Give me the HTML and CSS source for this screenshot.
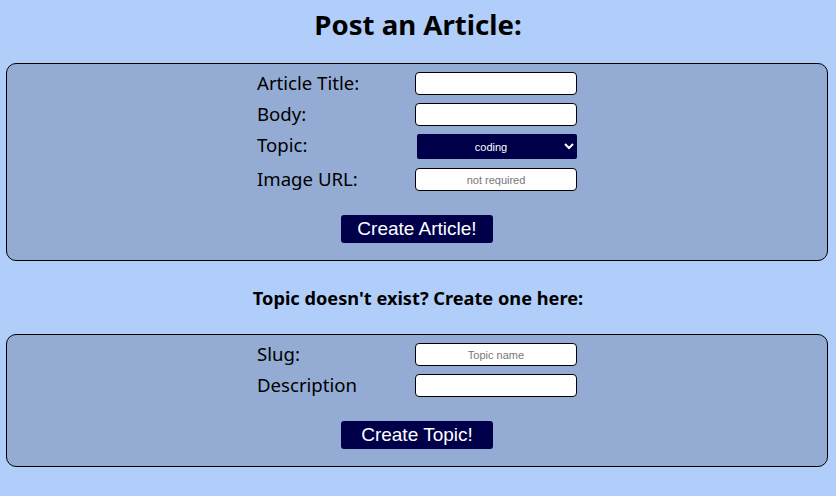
FILE: index.html
```html
<!DOCTYPE html>
<html>
<head>
<meta charset="utf-8">
<link rel="stylesheet" href="styles.css">
</head>
<body>
<h1 class="title">Post an Article:</h1>
<form class="panel">
  <div class="form-grid">
    <label class="label">Article Title:</label>
    <input class="field" type="text">
    <label class="label">Body:</label>
    <input class="field" type="text">
    <label class="label">Topic:</label>
    <select class="select"><option>coding</option></select>
    <label class="label">Image URL:</label>
    <input class="field" type="text" placeholder="not required">
  </div>
  <button class="submit" type="button">Create Article!</button>
</form>
<h2 class="subtitle">Topic doesn't exist? Create one here:</h2>
<form class="panel">
  <div class="form-grid">
    <label class="label">Slug:</label>
    <input class="field" type="text" placeholder="Topic name">
    <label class="label">Description</label>
    <input class="field" type="text">
  </div>
  <button class="submit" type="button">Create Topic!</button>
</form>
</body>
</html>
```
FILE: styles.css
```css
body {
  margin: 0;
  background: #b1cefb;
  font-family: "Noto Sans", "DejaVu Sans", sans-serif;
  color: #000;
}
.title {
  margin: 7px 0 22px;
  font-size: 27.6px;
  line-height: 34px;
  text-align: center;
  font-weight: 700;
}
.subtitle {
  margin: 26px 0 25px;
  font-size: 18.2px;
  line-height: 22px;
  text-align: center;
  font-weight: 700;
}
.panel {
  margin: 0 8px 0 6px;
  border: 1px solid #000;
  border-radius: 10px;
  background: #94acd4;
  padding: 8px 0 17px;
  display: flex;
  flex-direction: column;
  align-items: center;
}
.form-grid {
  display: grid;
  grid-template-columns: 158px 162px;
  row-gap: 8px;
  align-items: start;
}
.label {
  font-size: 18.6px;
  line-height: 22px;
}
.field {
  box-sizing: border-box;
  width: 162px;
  height: 23px;
  border: 1px solid #000;
  border-radius: 4px;
  background: #fff;
  margin: 0;
  padding: 0 4px;
  font-family: "Liberation Sans", Arial, sans-serif;
  font-size: 11px;
  text-align: center;
}
.field::placeholder {
  color: #777;
}
.select {
  box-sizing: border-box;
  width: 160px;
  height: 25px;
  margin: 0 0 1px 2px;
  border: none;
  border-radius: 2px;
  background-color: #00004a;
  color: #fff;
  font-family: "Liberation Sans", Arial, sans-serif;
  font-size: 11px;
  text-align: center;
  text-align-last: center;
}
.submit {
  margin-top: 24px;
  box-sizing: border-box;
  width: 152px;
  height: 28px;
  border: none;
  border-radius: 3px;
  background: #00004a;
  color: #fff;
  font-family: "Liberation Sans", Arial, sans-serif;
  font-size: 19px;
  padding: 0;
}
```
